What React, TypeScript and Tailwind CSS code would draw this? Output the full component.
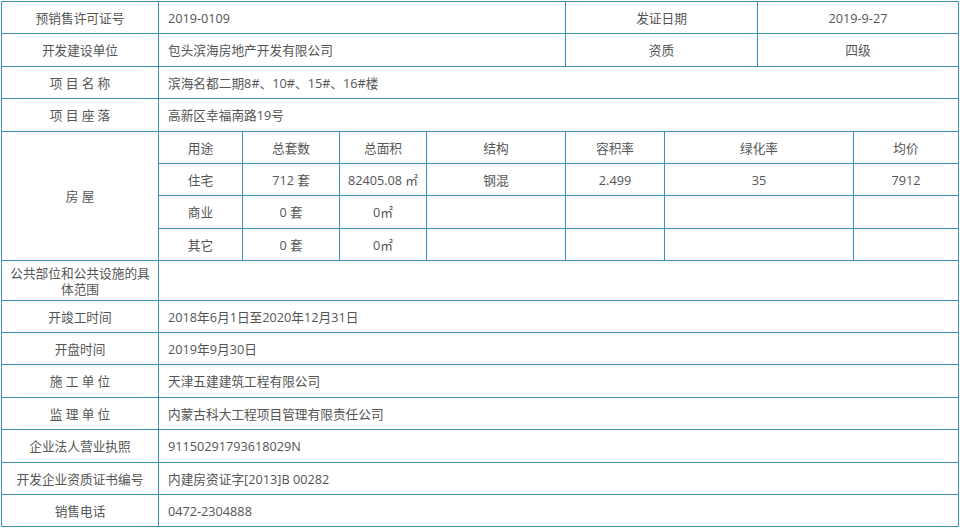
import React from "react"

const cell = "bg-white flex items-center"
const center = `${cell} justify-center text-center`
const left = `${cell} pl-[9px]`

export default function App() {
  return (
    <div className="w-[960px] h-[528px] bg-white pt-px pl-px">
      <div
        className="grid w-[958px] gap-px border border-[#3d8dbf] bg-[#3d8dbf] text-[12.7px] leading-[16px] text-[#555] font-['Open_Sans','Noto_Sans_CJK_SC',sans-serif]"
        style={{
          gridTemplateColumns: "156px 83px 96px 86px 138px 98px 92px 95px 104px",
          gridTemplateRows: "31px 32px 31px 32px 31px 31px 32px 31px 39px 31px 31px 32px 31px 32px 31px 31px",
        }}
      >
        {/* 基本信息 */}
        <div className={center}>预销售许可证号</div>
        <div className={`${left} col-span-4`}>2019-0109</div>
        <div className={`${center} col-span-2`}>发证日期</div>
        <div className={`${center} col-span-2`}>2019-9-27</div>

        <div className={center}>开发建设单位</div>
        <div className={`${left} col-span-4`}>包头滨海房地产开发有限公司</div>
        <div className={`${center} col-span-2`}>资质</div>
        <div className={`${center} col-span-2`}>四级</div>

        <div className={center}>项 目 名 称</div>
        <div className={`${left} col-span-8`}>滨海名都二期8#、10#、15#、16#楼</div>

        <div className={center}>项 目 座 落</div>
        <div className={`${left} col-span-8`}>高新区幸福南路19号</div>

        {/* 房屋 */}
        <div className={`${center} row-span-4`}>房 屋</div>
        <div className={center}>用途</div>
        <div className={center}>总套数</div>
        <div className={center}>总面积</div>
        <div className={center}>结构</div>
        <div className={center}>容积率</div>
        <div className={`${center} col-span-2`}>绿化率</div>
        <div className={center}>均价</div>

        <div className={center}>住宅</div>
        <div className={center}>712 套</div>
        <div className={center}>82405.08 ㎡</div>
        <div className={center}>钢混</div>
        <div className={center}>2.499</div>
        <div className={`${center} col-span-2`}>35</div>
        <div className={center}>7912</div>

        <div className={center}>商业</div>
        <div className={center}>0 套</div>
        <div className={center}>0㎡</div>
        <div className={center}></div>
        <div className={center}></div>
        <div className={`${center} col-span-2`}></div>
        <div className={center}></div>

        <div className={center}>其它</div>
        <div className={center}>0 套</div>
        <div className={center}>0㎡</div>
        <div className={center}></div>
        <div className={center}></div>
        <div className={`${center} col-span-2`}></div>
        <div className={center}></div>

        {/* 其它信息 */}
        <div className={`${center} px-2`}>公共部位和公共设施的具体范围</div>
        <div className={`${left} col-span-8`}></div>

        <div className={center}>开竣工时间</div>
        <div className={`${left} col-span-8`}>2018年6月1日至2020年12月31日</div>

        <div className={center}>开盘时间</div>
        <div className={`${left} col-span-8`}>2019年9月30日</div>

        <div className={center}>施 工 单 位</div>
        <div className={`${left} col-span-8`}>天津五建建筑工程有限公司</div>

        <div className={center}>监 理 单 位</div>
        <div className={`${left} col-span-8`}>内蒙古科大工程项目管理有限责任公司</div>

        <div className={center}>企业法人营业执照</div>
        <div className={`${left} col-span-8`}>91150291793618029N</div>

        <div className={center}>开发企业资质证书编号</div>
        <div className={`${left} col-span-8`}>内建房资证字[2013]B 00282</div>

        <div className={center}>销售电话</div>
        <div className={`${left} col-span-8`}>0472-2304888</div>
      </div>
    </div>
  )
}
